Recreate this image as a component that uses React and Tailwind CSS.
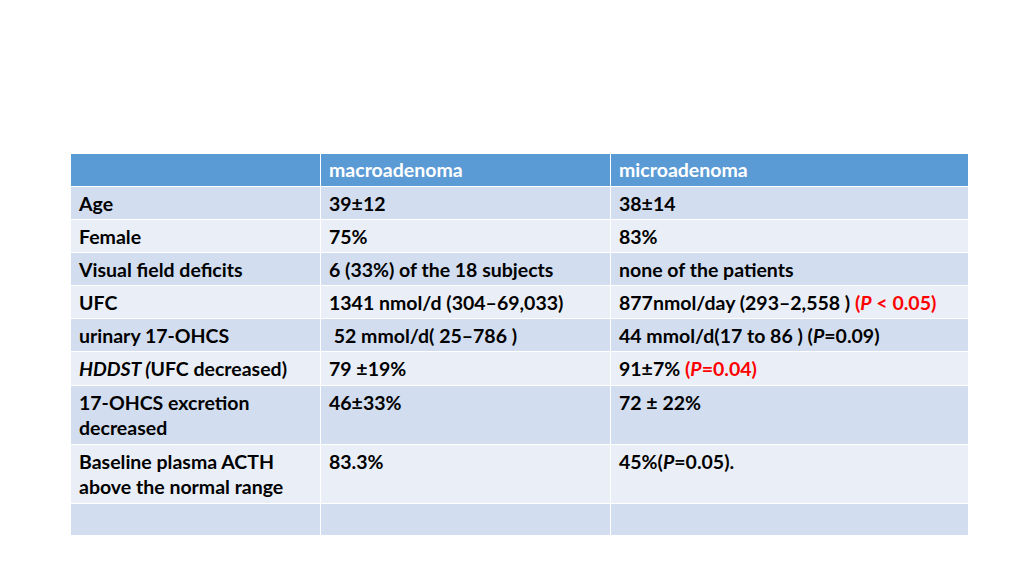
const rows = [
  { h: 'h-[32px]', cells: ['Age', '39±12', '38±14'] },
  { h: 'h-[32px]', cells: ['Female', '75%', '83%'] },
  { h: 'h-[32px]', cells: ['Visual field deficits', '6 (33%) of the 18 subjects', 'none of the patients'] },
  {
    h: 'h-[32px]',
    cells: [
      'UFC',
      '1341 nmol/d (304–69,033)',
      <>
        877nmol/day (293–2,558 ){' '}
        <span className="text-[#ff0000]">
          (<i>P</i> &lt; 0.05)
        </span>
      </>,
    ],
  },
  {
    h: 'h-[32px]',
    cells: [
      'urinary 17-OHCS',
      '\u00a052 mmol/d( 25–786 )',
      <>
        44 mmol/d(17 to 86 ) (<i>P</i>=0.09)
      </>,
    ],
  },
  {
    h: 'h-[33px]',
    cells: [
      <>
        <i>HDDST (</i>UFC decreased)
      </>,
      '79 ±19%',
      <>
        91±7%{' '}
        <span className="text-[#ff0000]">
          (<i>P</i>=0.04)
        </span>
      </>,
    ],
  },
  { h: 'h-[58px]', cells: [<>17-OHCS excretion<br />decreased</>, '46±33%', '72 ± 22%'] },
  { h: 'h-[58px]', cells: [<>Baseline plasma ACTH<br />above the normal range</>, '83.3%', <>45%(<i>P</i>=0.05).</>] },
]

export default function App() {
  return (
    <div className="min-h-screen w-full bg-white pt-[154px] pl-[71px]" style={{ fontFamily: 'Lato, "Open Sans", sans-serif' }}>
      <div className="grid w-[897px] grid-cols-[249px_289px_357px] gap-px bg-white text-[19.5px] font-bold leading-[25px] text-black">
        <div className="h-[32px] bg-[#5b9bd5]" />
        <div className="h-[32px] bg-[#5b9bd5] px-2 pt-[3px] text-white">macroadenoma</div>
        <div className="h-[32px] bg-[#5b9bd5] px-2 pt-[3px] text-white">microadenoma</div>
        {rows.map((row, i) =>
          row.cells.map((c, j) => (
            <div key={`${i}-${j}`} className={`${row.h} whitespace-nowrap px-2 pt-1 ${i % 2 === 0 ? 'bg-[#d2deef]' : 'bg-[#eaeff7]'}`}>
              {c}
            </div>
          ))
        )}
        <div className="h-[31px] bg-[#d2deef]" />
        <div className="h-[31px] bg-[#d2deef]" />
        <div className="h-[31px] bg-[#d2deef]" />
      </div>
    </div>
  )
}
